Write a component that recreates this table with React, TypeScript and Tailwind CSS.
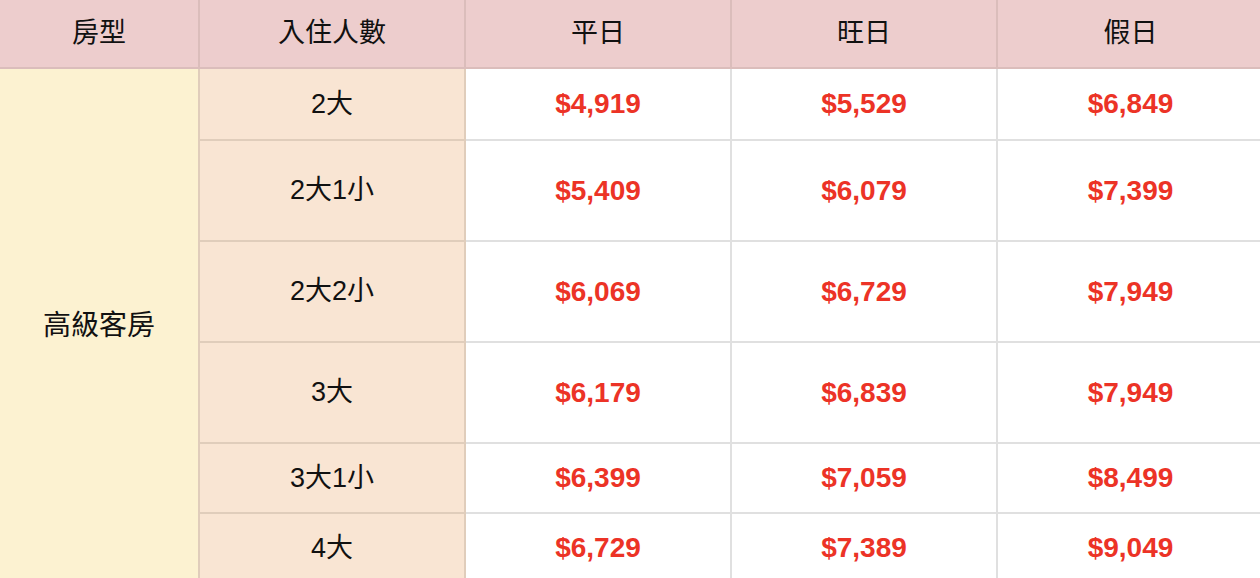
const rows = [
  { people: "2大", h: "h-[72px]", prices: ["$4,919", "$5,529", "$6,849"] },
  { people: "2大1小", h: "h-[101px]", prices: ["$5,409", "$6,079", "$7,399"] },
  { people: "2大2小", h: "h-[101px]", prices: ["$6,069", "$6,729", "$7,949"] },
  { people: "3大", h: "h-[101px]", prices: ["$6,179", "$6,839", "$7,949"] },
  { people: "3大1小", h: "h-[70px]", prices: ["$6,399", "$7,059", "$8,499"] },
  { people: "4大", h: "h-[70px]", prices: ["$6,729", "$7,389", "$9,049"] },
];

const headers = ["房型", "入住人數", "平日", "旺日", "假日"];

export default function App() {
  return (
    <div className="w-[1260px] overflow-hidden bg-white font-['Liberation_Sans','Noto_Sans_CJK_TC',sans-serif] text-[#111]">
      <table className="w-[1264px] table-fixed border-collapse">
        <colgroup>
          <col className="w-[199px]" />
          <col className="w-[266px]" />
          <col className="w-[266px]" />
          <col className="w-[266px]" />
          <col className="w-[267px]" />
        </colgroup>
        <thead>
          <tr className="h-[68px] bg-[#edcdcd]">
            {headers.map((h, i) => (
              <th
                key={h}
                className={`border-2 border-t-0 border-[#dbbdbb] text-[27px] font-normal ${i === 0 ? "border-l-0" : ""}`}
              >
                {h}
              </th>
            ))}
          </tr>
        </thead>
        <tbody>
          {rows.map((r, i) => (
            <tr key={r.people} className={r.h}>
              {i === 0 && (
                <td
                  rowSpan={rows.length}
                  className="border-2 border-l-0 border-[#e0cdbb] bg-[#fcf2d1] text-center text-[28px]"
                >
                  高級客房
                </td>
              )}
              <td className="border-2 border-[#e0cdbb] bg-[#f9e5d3] text-center text-[27px]">
                {r.people}
              </td>
              {r.prices.map((p, j) => (
                <td
                  key={j}
                  className="border-2 border-[#e0e0e0] text-center text-[28px] font-bold text-[#ec3326]"
                >
                  {p}
                </td>
              ))}
            </tr>
          ))}
        </tbody>
      </table>
    </div>
  );
}
